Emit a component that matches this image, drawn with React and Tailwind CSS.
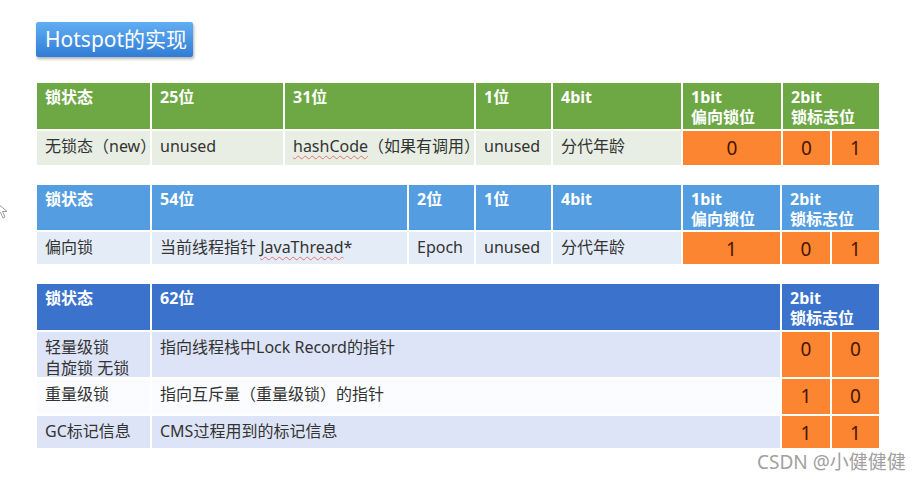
import React from 'react';

const font = { fontFamily: '"Noto Sans", "Noto Sans CJK SC", sans-serif' };

const Head = ({ bg, children, span }) => (
  <div className={`${bg} ${span ? 'col-span-2' : ''} px-[8px] pt-[4px] text-white font-bold text-[16px] leading-[20px] whitespace-nowrap`}>
    {children}
  </div>
);

const Cell = ({ bg, children }) => (
  <div className={`${bg} px-[8px] pt-[5px] text-[#333] text-[16px] leading-[21px] whitespace-nowrap`}>
    {children}
  </div>
);

const Bit = ({ children }) => (
  <div className="bg-[#fb8530] pt-[6px] text-center text-[19px] leading-[23px] text-[#4a1500]">{children}</div>
);

const Wavy = ({ children }) => (
  <span className="underline decoration-wavy decoration-[#e57373] decoration-1 underline-offset-[3px]">{children}</span>
);

export default function App() {
  const g = 'bg-[#6ea845]';
  const gRow = 'bg-[#e8eee3]';
  const b = 'bg-[#539de0]';
  const bRow = 'bg-[#e4ecf8]';
  const d = 'bg-[#3b72cc]';
  const dRow = 'bg-[#dde4f7]';

  return (
    <div className="relative w-[924px] h-[483px] bg-white overflow-hidden" style={font}>
      {/* cursor */}
      <svg className="absolute left-[-4px] top-[202px]" width="14" height="18" viewBox="0 0 14 18">
        <path d="M1 1 L1 14 L4.5 10.5 L7 16 L9 15 L6.5 9.5 L11 9.5 Z" fill="#fff" stroke="#9a9a9a" strokeWidth="1" />
      </svg>

      <div className="pl-[36px] pt-[22px] flex flex-col">
        <div className="w-[157px] h-[35px] rounded-[2px] bg-gradient-to-b from-[#62aef3] to-[#2f7cd6] shadow-[1px_2px_3px_rgba(0,0,0,0.3)] flex items-center pl-[9px] text-white text-[21px] whitespace-nowrap">
          Hotspot的实现
        </div>

        {/* table 1 */}
        <div className="mt-[26px] ml-px w-[842px] grid grid-cols-[113px_131px_189px_75px_128px_98px_47px_47px] grid-rows-[46px_34px] gap-[2px]">
          <Head bg={g}>锁状态</Head>
          <Head bg={g}>25位</Head>
          <Head bg={g}>31位</Head>
          <Head bg={g}>1位</Head>
          <Head bg={g}>4bit</Head>
          <Head bg={g}>1bit<br />偏向锁位</Head>
          <Head bg={g} span>2bit<br />锁标志位</Head>
          <Cell bg={gRow}>无锁态（new）</Cell>
          <Cell bg={gRow}>unused</Cell>
          <Cell bg={gRow}><Wavy>hashCode</Wavy>（如果有调用）</Cell>
          <Cell bg={gRow}>unused</Cell>
          <Cell bg={gRow}>分代年龄</Cell>
          <Bit>0</Bit>
          <Bit>0</Bit>
          <Bit>1</Bit>
        </div>

        {/* table 2 */}
        <div className="mt-[20px] ml-px w-[842px] grid grid-cols-[113px_255px_65px_75px_128px_97px_48px_47px] grid-rows-[45px_32px] gap-[2px]">
          <Head bg={b}>锁状态</Head>
          <Head bg={b}>54位</Head>
          <Head bg={b}>2位</Head>
          <Head bg={b}>1位</Head>
          <Head bg={b}>4bit</Head>
          <Head bg={b}>1bit<br />偏向锁位</Head>
          <Head bg={b} span>2bit<br />锁标志位</Head>
          <Cell bg={bRow}>偏向锁</Cell>
          <Cell bg={bRow}>当前线程指针 <Wavy>JavaThread</Wavy>*</Cell>
          <Cell bg={bRow}>Epoch</Cell>
          <Cell bg={bRow}>unused</Cell>
          <Cell bg={bRow}>分代年龄</Cell>
          <Bit>1</Bit>
          <Bit>0</Bit>
          <Bit>1</Bit>
        </div>

        {/* table 3 */}
        <div className="mt-[20px] ml-px w-[842px] grid grid-cols-[113px_628px_48px_47px] grid-rows-[46px_45px_35px_32px] gap-[2px]">
          <Head bg={d}>锁状态</Head>
          <Head bg={d}>62位</Head>
          <Head bg={d} span>2bit<br />锁标志位</Head>
          <Cell bg={dRow}>轻量级锁<br />自旋锁 无锁</Cell>
          <Cell bg={dRow}>指向线程栈中Lock Record的指针</Cell>
          <Bit>0</Bit>
          <Bit>0</Bit>
          <Cell bg="bg-[#fbfcff]">重量级锁</Cell>
          <Cell bg="bg-[#fbfcff]">指向互斥量（重量级锁）的指针</Cell>
          <Bit>1</Bit>
          <Bit>0</Bit>
          <Cell bg={dRow}>GC标记信息</Cell>
          <Cell bg={dRow}>CMS过程用到的标记信息</Cell>
          <Bit>1</Bit>
          <Bit>1</Bit>
        </div>
      </div>

      <div className="absolute left-[757px] top-[451px] text-[19px] leading-[23px] text-[#a0a0a0] whitespace-nowrap">CSDN @小健健健</div>
    </div>
  );
}
